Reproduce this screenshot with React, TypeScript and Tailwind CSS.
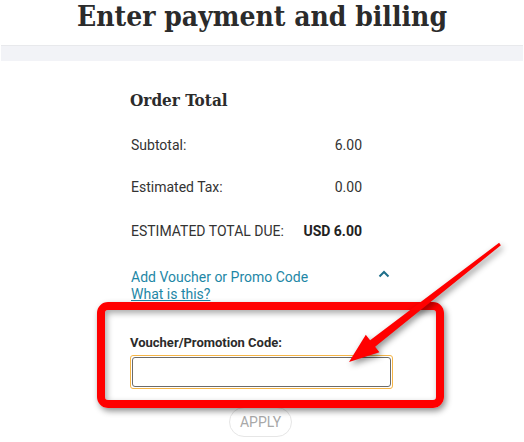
import React from "react";

export default function App() {
  return (
    <div className="relative w-[524px] h-[442px] overflow-hidden bg-white" style={{ fontFamily: "Roboto, 'Liberation Sans', sans-serif" }}>
      <div className="h-[45px] flex justify-center items-start">
        <h1 className="text-[28px] leading-[34px] font-bold text-[#2b2b2b]" style={{ fontFamily: "'DejaVu Serif Condensed', 'DejaVu Serif', serif" }}>
          Enter payment and billing
        </h1>
      </div>
      <div className="mx-[1px] h-[16px] border-t border-[#e8e9ec] bg-[#f2f3f7]" />
      <div className="pl-[130px] w-[362px]">
        <h2 className="mt-[27px] text-[17px] leading-[24px] font-bold text-[#2b2b2b]" style={{ fontFamily: "'DejaVu Serif Condensed', 'DejaVu Serif', serif" }}>
          Order Total
        </h2>
        <div className="mt-[25px] flex flex-col text-[14px] text-[#333] pl-[1px]">
          <div className="flex justify-between leading-[16px]">
            <span>Subtotal:</span>
            <span>6.00</span>
          </div>
          <div className="mt-[26px] flex justify-between leading-[16px]">
            <span>Estimated Tax:</span>
            <span>0.00</span>
          </div>
          <div className="mt-[28px] flex justify-between leading-[16px]">
            <span>ESTIMATED TOTAL DUE:</span>
            <span className="font-bold text-[#222]">USD 6.00</span>
          </div>
        </div>
        <div className="mt-[30px] pl-[1px] flex items-start justify-between w-[262px] text-[14px] text-[#1e87a6]">
          <div className="flex flex-col leading-[17px]">
            <span>Add Voucher or Promo Code</span>
            <span className="underline">What is this?</span>
          </div>
          <svg width="12" height="8" viewBox="0 0 12 8" className="mt-[1px] mr-[2px]">
            <path d="M1.5 6.5 L6 2 L10.5 6.5" fill="none" stroke="#1e6f8a" strokeWidth="2" />
          </svg>
        </div>
        <div className="mt-[32px] text-[13px] font-bold text-[#2b2b2b] leading-[16px]">Voucher/Promotion Code:</div>
        <div className="mt-[4px] w-[263px] h-[34px] rounded-[3px] border border-[#f5b547] p-[1px]">
          <div className="w-full h-full rounded-[3px] border border-[#6b6b6b] bg-white" />
        </div>
        <div className="mt-[18px] ml-[99px] w-[63px] h-[30px] rounded-full border border-[#e6e6e6] flex items-center justify-center text-[14px] text-[#a8a8a8]">
          APPLY
        </div>
      </div>

      {/* annotation: red box */}
      <div className="absolute left-[97px] top-[302px] w-[347px] h-[106px] rounded-[11px] border-[8px] border-[#ff0000] shadow-[2px_3px_6px_rgba(0,0,0,0.45),inset_2px_3px_6px_rgba(0,0,0,0.35)]" />
      {/* annotation: arrow */}
      <svg className="absolute left-0 top-0" width="524" height="442" viewBox="0 0 524 442" style={{ filter: "drop-shadow(2px 3px 3px rgba(0,0,0,0.45))" }}>
        <polygon points="349,362 365.8,334.8 370.1,340.3 499.1,242.8 500.9,245.2 375.1,346.7 379.4,352.2" fill="#ff0000" />
      </svg>
    </div>
  );
}
